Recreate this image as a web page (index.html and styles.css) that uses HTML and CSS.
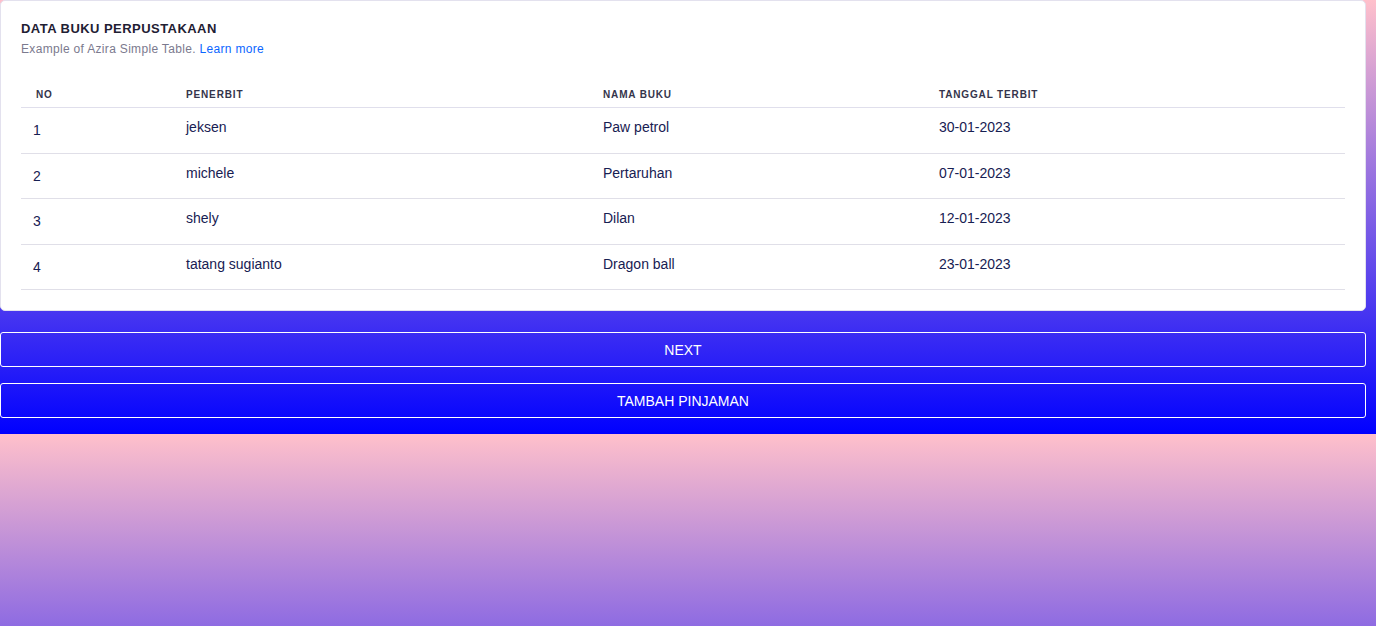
FILE: index.html
```html
<!DOCTYPE html>
<html lang="id">
<head>
<meta charset="utf-8">
<title>Data Buku Perpustakaan</title>
<link rel="stylesheet" href="styles.css">
</head>
<body>
  <div class="page">
    <section class="card">
      <h1 class="card-title">DATA BUKU PERPUSTAKAAN</h1>
      <p class="card-sub">Example of Azira Simple Table. <a href="#" class="link">Learn more</a></p>
      <table class="table">
        <colgroup>
          <col class="c-no">
          <col class="c-pen">
          <col class="c-nama">
          <col class="c-tgl">
        </colgroup>
        <thead>
          <tr>
            <th class="th-no">NO</th>
            <th>PENERBIT</th>
            <th>NAMA BUKU</th>
            <th>TANGGAL TERBIT</th>
          </tr>
        </thead>
        <tbody>
          <tr>
            <td class="td-no">1</td>
            <td>jeksen</td>
            <td>Paw petrol</td>
            <td>30-01-2023</td>
          </tr>
          <tr>
            <td class="td-no">2</td>
            <td>michele</td>
            <td>Pertaruhan</td>
            <td>07-01-2023</td>
          </tr>
          <tr>
            <td class="td-no">3</td>
            <td>shely</td>
            <td>Dilan</td>
            <td>12-01-2023</td>
          </tr>
          <tr>
            <td class="td-no">4</td>
            <td>tatang sugianto</td>
            <td>Dragon ball</td>
            <td>23-01-2023</td>
          </tr>
        </tbody>
      </table>
    </section>
    <div class="actions">
      <button class="btn" type="button">NEXT</button>
      <button class="btn" type="button">TAMBAH PINJAMAN</button>
    </div>
  </div>
</body>
</html>
```

FILE: styles.css
```css
html {
  margin: 0;
  padding: 0;
}

body {
  margin: 0;
  padding: 0 10px 16px 0;
  font-family: "Liberation Sans", Arial, sans-serif;
  background: linear-gradient(to bottom, pink, blue);
}

.page {
  display: flex;
  flex-direction: column;
}

.card {
  background: #ffffff;
  border: 1px solid #e3e1ee;
  border-radius: 5px;
  padding: 20px 20px 20px 20px;
}

.card-title {
  margin: 0;
  font-size: 13px;
  line-height: 16px;
  font-weight: 700;
  color: #1f2033;
  letter-spacing: 0.45px;
}

.card-sub {
  margin: 4px 0 0 0;
  font-size: 12px;
  line-height: 16px;
  color: #7b7a8e;
  letter-spacing: 0.32px;
}

.link {
  color: #0b66ff;
  text-decoration: none;
}

.table {
  margin-top: 24px;
  width: 100%;
  border-collapse: collapse;
  table-layout: fixed;
}

.c-no { width: 165px; }
.c-pen { width: 417px; }
.c-nama { width: 336px; }
.c-tgl { width: auto; }

.table th {
  text-align: left;
  font-size: 10px;
  line-height: 12px;
  font-weight: 700;
  letter-spacing: 0.85px;
  color: #34344b;
  padding: 8px 0 6px 0;
  border-bottom: 1px solid #e0dfec;
}

.table th.th-no {
  padding-left: 15px;
}

.table td {
  font-size: 14px;
  line-height: 20.5px;
  color: #172052;
  padding: 9px 0 15px 0;
  vertical-align: top;
  border-bottom: 1px solid #e0dfe8;
}

.table td.td-no {
  padding: 12px 0 12px 12px;
}

.actions {
  display: flex;
  flex-direction: column;
  gap: 16px;
  margin-top: 21px;
}

.btn {
  height: 35px;
  width: 100%;
  background: transparent;
  border: 1px solid #ffffff;
  border-radius: 3px;
  color: #ffffff;
  font-family: "Liberation Sans", Arial, sans-serif;
  font-size: 14px;
  padding: 0;
  cursor: pointer;
}
```
